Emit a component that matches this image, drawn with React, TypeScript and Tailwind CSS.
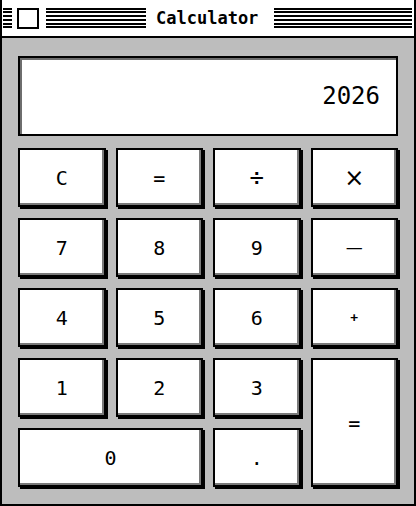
import React from 'react';

const Stripes = ({ className = '' }: { className?: string }) => (
  <div className={`flex flex-col gap-[1.8px] ${className}`}>
    {[0, 1, 2, 3, 4, 5].map((i) => (
      <div key={i} className="h-[2px] bg-black" />
    ))}
  </div>
);

type Key = { label: string; area: string; size?: string };

const keys: Key[] = [
  { label: 'C', area: 'col-start-1 row-start-1' },
  { label: '=', area: 'col-start-2 row-start-1' },
  { label: '÷', area: 'col-start-3 row-start-1', size: 'text-[24px]' },
  { label: '×', area: 'col-start-4 row-start-1', size: "text-[24px] font-['DejaVu_Sans',sans-serif]" },
  { label: '7', area: 'col-start-1 row-start-2' },
  { label: '8', area: 'col-start-2 row-start-2' },
  { label: '9', area: 'col-start-3 row-start-2' },
  { label: '—', area: 'col-start-4 row-start-2', size: "text-[17px] font-['DejaVu_Sans',sans-serif]" },
  { label: '4', area: 'col-start-1 row-start-3' },
  { label: '5', area: 'col-start-2 row-start-3' },
  { label: '6', area: 'col-start-3 row-start-3' },
  { label: '+', area: 'col-start-4 row-start-3', size: 'text-[13px] font-bold' },
  { label: '1', area: 'col-start-1 row-start-4' },
  { label: '2', area: 'col-start-2 row-start-4' },
  { label: '3', area: 'col-start-3 row-start-4' },
  { label: '=', area: 'col-start-4 row-start-4 row-span-2' },
  { label: '0', area: 'col-start-1 col-span-2 row-start-5' },
  { label: '.', area: 'col-start-3 row-start-5' },
];

export default function App() {
  return (
    <div className="flex h-[506px] w-[416px] flex-col border-x-2 border-b-2 border-black bg-[#bdbdbd] font-['DejaVu_Sans_Mono',monospace] text-black">
      {/* title bar */}
      <div className="flex h-[38px] items-center border-b-2 border-black bg-white">
        <Stripes className="ml-[1px] w-[9px]" />
        <div className="ml-[5px] h-[21px] w-[22px] border-2 border-black bg-white" />
        <Stripes className="ml-[7px] w-[100px]" />
        <span className="ml-[10px] text-[17px] leading-none font-bold">Calculator</span>
        <Stripes className="mr-[2px] ml-[16px] flex-1" />
      </div>

      <div className="flex flex-col px-[16px] pt-[18px]">
        {/* display */}
        <div className="flex h-[80px] items-center justify-end border-2 border-black bg-white pr-[16px] text-[24px] shadow-[inset_2px_2px_0_#6e6e6e]">
          2026
        </div>

        {/* keypad */}
        <div className="mt-[12px] grid grid-cols-4 grid-rows-[repeat(5,59px)] gap-x-[10px] gap-y-[11px]">
          {keys.map((k, i) => (
            <button
              key={i}
              className={`flex items-center justify-center border-2 border-black bg-white shadow-[2px_2px_0_#000,inset_-2px_-2px_0_#7a7a7a] ${k.size ?? 'text-[20px]'} ${k.area}`}
            >
              {k.label}
            </button>
          ))}
        </div>
      </div>
    </div>
  );
}
